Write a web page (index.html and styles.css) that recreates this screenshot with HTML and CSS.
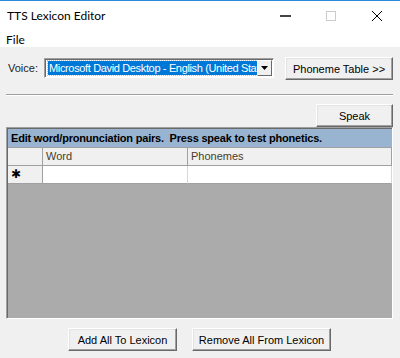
FILE: index.html
```html
<!DOCTYPE html>
<html lang="en">
<head>
    <meta charset="UTF-8">
    <title>TTS Lexicon Editor</title>
    <link rel="stylesheet" href="styles.css">
</head>
<body>
<div class="window">
    <div class="titlebar">
        <span class="title">TTS Lexicon Editor</span>
        <div class="controls">
            <div class="ctl"><div class="min-icon"></div></div>
            <div class="ctl"><div class="max-icon"></div></div>
            <div class="ctl">
                <svg width="10" height="10" viewBox="0 0 10 10"><path d="M0 0L10 10M10 0L0 10" stroke="#000" stroke-width="1"/></svg>
            </div>
        </div>
    </div>

    <div class="menubar"><span class="menu">File</span></div>

    <div class="content">
        <div class="voice-row">
            <span class="label">Voice:</span>
            <div class="combo">
                <div class="combo-field"><span class="combo-text">Microsoft David Desktop - English (United States)</span></div>
                <span class="combo-btn">
                    <svg width="7" height="4" viewBox="0 0 7 4"><path d="M0 0h7L3.5 4z" fill="#000"/></svg>
                </span>
            </div>
            <button class="btn btn-phoneme">Phoneme Table &gt;&gt;</button>
        </div>

        <div class="separator"></div>

        <div class="speak-row">
            <button class="btn btn-speak">Speak</button>
        </div>

        <div class="grid">
            <div class="caption">Edit word/pronunciation pairs.&nbsp; Press speak to test phonetics.</div>
            <div class="grid-head">
                <span class="rowhead"></span>
                <span class="col col-word">Word</span>
                <span class="col col-phon">Phonemes</span>
            </div>
            <div class="grid-row">
                <span class="rowhead star">&#10033;</span>
                <span class="cell col-word"></span>
                <span class="cell col-phon"></span>
            </div>
            <div class="grid-empty"></div>
        </div>

        <div class="bottom-row">
            <button class="btn btn-add">Add All To Lexicon</button>
            <button class="btn btn-remove">Remove All From Lexicon</button>
        </div>
    </div>
</div>
</body>
</html>
```

FILE: styles.css
```css
*{
    padding:0;
    margin:0;
    box-sizing:border-box;
}

body{
    width:400px;
    height:358px;
    overflow:hidden;
    background:#f0f0f0;
    font-family:"Liberation Sans", Arial, sans-serif;
    font-size:11px;
    color:#000;
}

.window{
    width:400px;
    height:358px;
    display:flex;
    flex-direction:column;
}

/* title bar */
.titlebar{
    height:31px;
    background:#fff;
    border-top:1px solid #2b8ad9;
    display:flex;
    align-items:center;
}

.title{
    flex:1;
    padding-left:7px;
    font-family:Lato, "Noto Sans", sans-serif;
    font-size:12px;
    margin-top:-1px;
}

.controls{
    display:flex;
    flex:none;
    width:138px;
    height:30px;
}

.ctl{
    flex:none;
    width:46px;
    height:30px;
    display:flex;
    align-items:center;
    justify-content:center;
}

.min-icon{
    width:11px;
    height:2px;
    background:#444;
}

.max-icon{
    width:10px;
    height:10px;
    border:1px solid #ccc;
}

.menubar{
    height:16px;
    background:#fff;
    padding-left:6px;
    display:flex;
    align-items:center;
}

.menu{
    font-family:Lato, "Noto Sans", sans-serif;
    font-size:12px;
}

.content{
    flex:1;
    padding:10px 7px 0 6px;
    display:flex;
    flex-direction:column;
}

/* buttons */
.btn{
    height:23px;
    font-family:"Liberation Sans", Arial, sans-serif;
    font-size:11px;
    color:#000;
    background:#f0f0f0;
    border:1px solid;
    border-color:#fff #696969 #696969 #fff;
    box-shadow:inset -1px -1px #a0a0a0, inset 1px 1px #e3e3e3;
}

.voice-row{
    display:flex;
    align-items:flex-start;
    height:23px;
}

.label{
    width:38px;
    padding:5px 0 0 2px;
    color:#222;
}

.combo{
    width:230px;
    height:20px;
    margin-top:1px;
    background:#fff;
    border:1px solid;
    border-color:#a0a0a0 #fff #fff #a0a0a0;
    box-shadow:inset 1px 1px #696969;
    display:flex;
    padding:2px 1px 2px 3px;
}

.combo-field{
    flex:1;
    min-width:0;
    background:#0078d7;
    overflow:hidden;
    outline:1px dotted #99c9ef;
}

.combo-text{
    display:block;
    color:#fff;
    white-space:nowrap;
    line-height:14px;
    padding-left:1px;
    letter-spacing:-0.35px;
}

.combo-btn{
    width:15px;
    height:16px;
    margin-top:-1px;
    background:#f0f0f0;
    border:1px solid;
    border-color:#fff #696969 #696969 #fff;
    display:flex;
    align-items:center;
    justify-content:center;
}

.btn-phoneme{
    width:108px;
    margin-left:11px;
}

.separator{
    margin-top:14px;
    height:2px;
    border-top:1px solid #a0a0a0;
    border-bottom:1px solid #fff;
}

.speak-row{
    display:flex;
    justify-content:flex-end;
    margin-top:8px;
}

.btn-speak{
    width:77px;
}

/* grid */
.grid{
    height:192px;
    width:387px;
    border:1px solid;
    border-color:#a0a0a0 #fff #fff #a0a0a0;
    box-shadow:inset 1px 1px #696969;
    background:#ababab;
    display:flex;
    flex-direction:column;
    padding:1px 0 0 1px;
}

.caption{
    height:19px;
    background:#99b4d1;
    font-weight:bold;
    padding:3px 0 0 3px;
    white-space:nowrap;
    overflow:hidden;
    border-bottom:1px solid #a0a0a0;
    letter-spacing:-0.2px;
}

.grid-head,
.grid-row{
    display:flex;
    height:18px;
}

.grid-head{
    background:#f0f0f0;
}

.rowhead{
    width:35px;
    background:#f0f0f0;
    border-right:1px solid #a0a0a0;
    border-bottom:1px solid #a0a0a0;
}

.col{
    background:#f0f0f0;
    border-right:1px solid #a0a0a0;
    border-bottom:1px solid #a0a0a0;
    padding:2px 0 0 3px;
    color:#4a3c2c;
}

.col-word{
    width:145px;
}

.col-phon{
    flex:1;
}

.cell{
    background:#fff;
    border-right:1px solid #d8d8d8;
    border-bottom:1px solid #a0a0a0;
}

.star{
    font-size:12px;
    line-height:17px;
    padding-left:3px;
}

.grid-empty{
    flex:1;
}

.bottom-row{
    display:flex;
    margin-top:9px;
    padding-left:62px;
}

.btn-add{
    width:109px;
}

.btn-remove{
    width:139px;
    margin-left:15px;
}
```
